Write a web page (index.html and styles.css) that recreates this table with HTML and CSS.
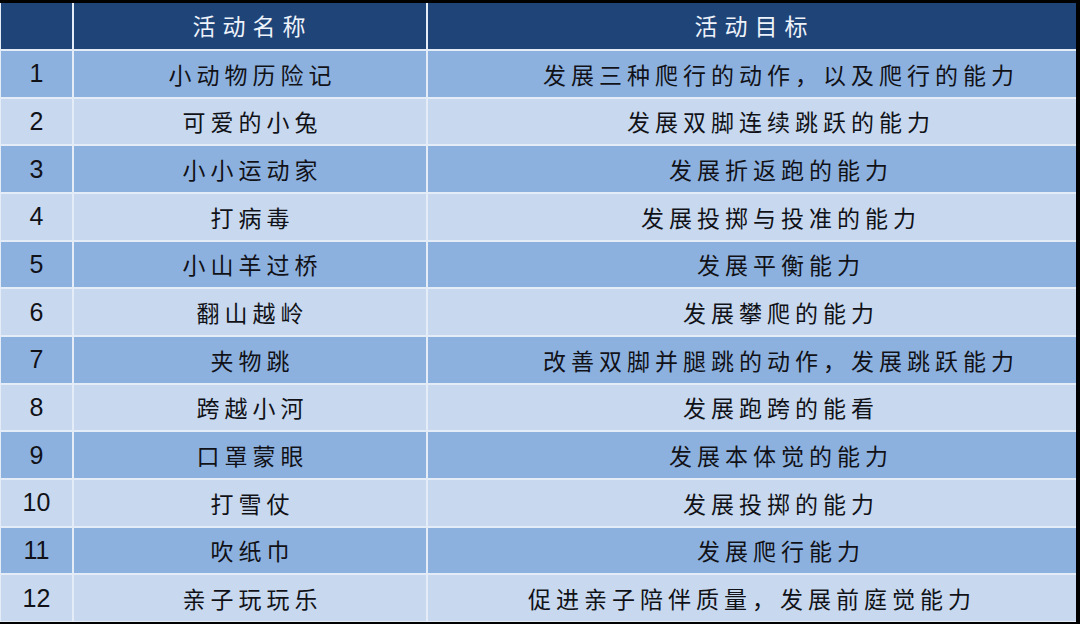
FILE: index.html
```html
<!DOCTYPE html>
<html lang="zh">
<head>
<meta charset="utf-8">
<title>活动表</title>
<link rel="stylesheet" href="styles.css">
</head>
<body>
<div class="table">
  <div class="cell head"></div>
  <div class="cell head name">活动名称</div>
  <div class="cell head goal">活动目标</div>

  <div class="cell num dark">1</div><div class="cell name dark">小动物历险记</div><div class="cell goal dark">发展三种爬行的动作，以及爬行的能力</div>
  <div class="cell num light">2</div><div class="cell name light">可爱的小兔</div><div class="cell goal light">发展双脚连续跳跃的能力</div>
  <div class="cell num dark">3</div><div class="cell name dark">小小运动家</div><div class="cell goal dark">发展折返跑的能力</div>
  <div class="cell num light">4</div><div class="cell name light">打病毒</div><div class="cell goal light">发展投掷与投准的能力</div>
  <div class="cell num dark">5</div><div class="cell name dark">小山羊过桥</div><div class="cell goal dark">发展平衡能力</div>
  <div class="cell num light">6</div><div class="cell name light">翻山越岭</div><div class="cell goal light">发展攀爬的能力</div>
  <div class="cell num dark">7</div><div class="cell name dark">夹物跳</div><div class="cell goal dark">改善双脚并腿跳的动作，发展跳跃能力</div>
  <div class="cell num light">8</div><div class="cell name light">跨越小河</div><div class="cell goal light">发展跑跨的能看</div>
  <div class="cell num dark">9</div><div class="cell name dark">口罩蒙眼</div><div class="cell goal dark">发展本体觉的能力</div>
  <div class="cell num light">10</div><div class="cell name light">打雪仗</div><div class="cell goal light">发展投掷的能力</div>
  <div class="cell num dark">11</div><div class="cell name dark">吹纸巾</div><div class="cell goal dark">发展爬行能力</div>
  <div class="cell num light">12</div><div class="cell name light">亲子玩玩乐</div><div class="cell goal light centered">促进亲子陪伴质量，发展前庭觉能力</div>
</div>
</body>
</html>
```
FILE: styles.css
```css
html, body {
  margin: 0;
  padding: 0;
  background: #000;
  width: 1080px;
  height: 624px;
  overflow: hidden;
}
.table {
  margin-top: 3px;
  width: 1075px;
  height: 618px;
  padding: 0 0 1px 1px;
  background: #e4ecf7;
  display: grid;
  grid-template-columns: 71px 352px 1fr;
  grid-template-rows: 46px repeat(12, 1fr);
  gap: 2px;
}
.cell {
  display: flex;
  align-items: center;
  justify-content: center;
  font-family: "Noto Sans CJK SC", "Noto Sans", sans-serif;
  font-size: 23px;
  letter-spacing: 5px;
  color: #111218;
  white-space: nowrap;
}
.cell.head {
  background: #1f4478;
  color: #eef3fb;
  letter-spacing: 7px;
  padding-bottom: 2px;
}
.cell.dark { background: #8db1df; }
.cell.light { background: #c8d9ef; }
.cell.name { padding-left: 5px; }
.cell.goal { padding-left: 58px; }
.cell.head.goal { padding-left: 5px; }
.cell.goal.centered { padding-left: 0; }
.cell.num {
  font-family: "Liberation Sans", Arial, sans-serif;
  font-size: 25px;
  letter-spacing: 0;
}
```
